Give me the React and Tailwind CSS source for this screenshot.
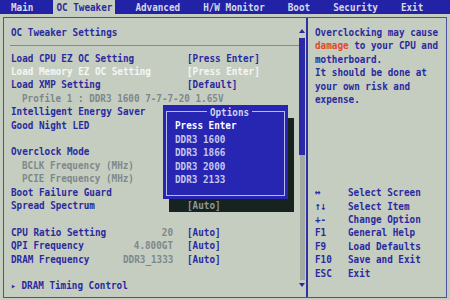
import React from "react";

const tabs = ["Main", "OC Tweaker", "Advanced", "H/W Monitor", "Boot", "Security", "Exit"];

const rows = [
  { name: "Load CPU EZ OC Setting", value: "[Press Enter]" },
  { name: "Load Memory EZ OC Setting", value: "[Press Enter]", active: true },
  { name: "Load XMP Setting", value: "[Default]" },
  { name: "Profile 1 : DDR3 1600 7-7-7-20 1.65V", info: true },
  { name: "Intelligent Energy Saver" },
  { name: "Good Night LED" },
  {},
  { name: "Overclock Mode" },
  { name: "BCLK Frequency (MHz)", info: true },
  { name: "PCIE Frequency (MHz)", info: true },
  { name: "Boot Failure Guard" },
  { name: "Spread Spectrum", value: "[Auto]", shaded: true },
  {},
  { name: "CPU Ratio Setting", current: "20", value: "[Auto]" },
  { name: "QPI Frequency", current: "4.800GT", value: "[Auto]" },
  { name: "DRAM Frequency", current: "DDR3_1333", value: "[Auto]" },
  {},
  { name: "DRAM Timing Control", sub: true },
];

const options = ["Press Enter", "DDR3 1600", "DDR3 1866", "DDR3 2000", "DDR3 2133"];

const keys = [
  ["↔", "Select Screen"],
  ["↑↓", "Select Item"],
  ["+-", "Change Option"],
  ["F1", "General Help"],
  ["F9", "Load Defaults"],
  ["F10", "Save and Exit"],
  ["ESC", "Exit"],
];

// bitmap BIOS font is taller than a normal monospace cell
const T = ({ children, className = "" }) => (
  <span className={"inline-block scale-y-[1.2] " + className}>{children}</span>
);

export default function App() {
  return (
    <div className="relative w-[450px] h-[300px] overflow-hidden flex flex-col bg-[#c5cdc1] text-[#2a2a9e] font-['DejaVu_Sans_Mono',monospace] text-[9.3px] font-bold leading-[13.4px]">
      {/* menu bar */}
      <div className="h-[14px] bg-[#2222a6] flex gap-[17px] pl-[8px] text-[#d6dae8]">
        {tabs.map((t) => (
          <div
            key={t}
            className={`px-[3px] h-[14px] flex items-center whitespace-nowrap ${
              t === "OC Tweaker" ? "bg-[#c5cdc1] text-[#2a2a9e]" : ""
            }`}
          >
            <T>{t}</T>
          </div>
        ))}
      </div>

      <div className="flex-1 pt-[3px] px-[3px] pb-[2px]">
        <div className="h-full flex border border-[#4c519c]">
          {/* left panel */}
          <div className="flex-1 flex">
            <div className="flex-1 flex flex-col">
              <div className="pt-[7px] pl-[7px] h-[20.7px]">
                <T>OC Tweaker Settings</T>
              </div>
              <div className="mt-[6px] ml-[6px] h-px bg-[#7c82cc]" />
              <div className="mt-[5px]">
                {rows.map((r, i) => (
                  <div
                    key={i}
                    className="grid grid-cols-[112px_50px_14px_1fr] h-[13.4px] pl-[7px] items-center whitespace-nowrap"
                  >
                    <div
                      className={
                        r.info
                          ? "pl-[11px] text-[#7e888a]"
                          : r.active
                          ? "text-[#f4f6f4]"
                          : ""
                      }
                    >
                      {r.sub ? (
                        <T>
                          <span className="text-[8px]">▸</span> {r.name}
                        </T>
                      ) : (
                        r.name && <T>{r.name}</T>
                      )}
                    </div>
                    <div className="text-right text-[#7e888a]">
                      {r.current && <T>{r.current}</T>}
                    </div>
                    <div />
                    <div
                      className={
                        r.shaded
                          ? "relative z-10 text-[#8f9896]"
                          : r.active
                          ? "text-[#f4f6f4]"
                          : ""
                      }
                    >
                      {r.value && <T>{r.value}</T>}
                    </div>
                  </div>
                ))}
              </div>
            </div>

            {/* scrollbar */}
            <div className="w-[6px] mr-[1px] flex flex-col items-center pt-[11px] pb-[10px]">
              <svg width="6" height="4" viewBox="0 0 6 4">
                <path d="M3 0L6 4H0Z" fill="#2a2a9e" />
              </svg>
              <div className="mt-[5px] w-[6px] h-[117px] bg-[#2a2aa8]" />
              <div className="flex-1 w-[5px] bg-[#a2aaa2]" />
              <svg width="6" height="4" viewBox="0 0 6 4" className="mt-[3px]">
                <path d="M0 0H6L3 4Z" fill="#2a2a9e" />
              </svg>
            </div>
          </div>

          {/* right help panel */}
          <div className="w-[140px] border-l-2 border-[#2e32a2] flex flex-col pl-[7px] pt-[7px] pb-[18px] whitespace-nowrap">
            <div className="h-[13.4px]"><T>Overclocking may cause</T></div>
            <div className="h-[13.4px]">
              <T>
                <span className="text-[#e2482e]">damage</span> to your CPU and
              </T>
            </div>
            <div className="h-[13.4px]"><T>motherboard.</T></div>
            <div className="h-[13.4px]"><T>It should be done at</T></div>
            <div className="h-[13.4px]"><T>your own risk and</T></div>
            <div className="h-[13.4px]"><T>expense.</T></div>

            <div className="mt-auto">
              {keys.map(([k, d]) => (
                <div key={k} className="flex h-[13.4px]">
                  <div className="w-[33px]"><T>{k}</T></div>
                  <T>{d}</T>
                </div>
              ))}
            </div>
          </div>
        </div>
      </div>

      {/* options popup with its shadow */}
      <div className="absolute left-[169px] top-[118px] w-[125px] h-[94px] bg-[#17231e]" />
      <div className="absolute left-[163px] top-[105px] w-[125px] h-[94px] bg-[#2626b2] px-[3px] pb-[3px]">
        <fieldset className="h-full border border-[#b8bce8] pl-[8px] whitespace-nowrap">
          <legend className="mx-auto px-[3px] text-[#cdd1f2] h-[13.4px]">
            <T>Options</T>
          </legend>
          {options.map((o, i) => (
            <div
              key={o}
              className={`h-[13.4px] ${i === 0 ? "text-white" : "text-[#c4c8ec]"}`}
            >
              <T>{o}</T>
            </div>
          ))}
        </fieldset>
      </div>
    </div>
  );
}
